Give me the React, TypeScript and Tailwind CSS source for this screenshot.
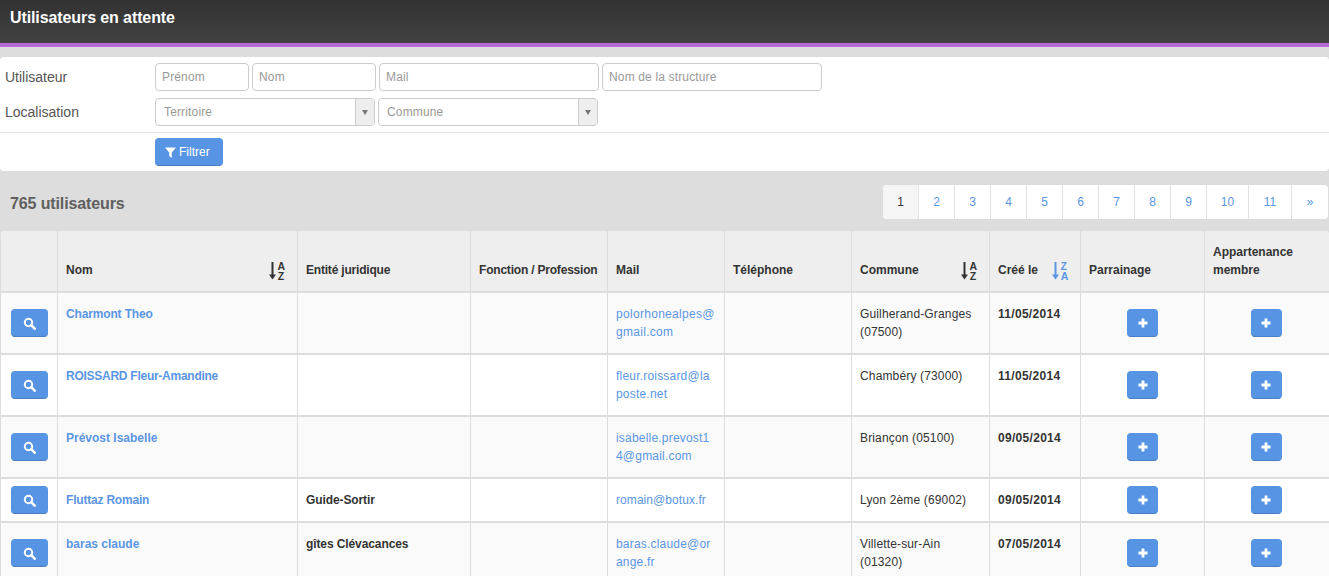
import React from "react";
const Sort = ({ blue, down }: { blue?: boolean; down?: boolean }) => {
  const c = blue ? "#5a96e3" : "#333";
  return (
    <svg width="18" height="22" viewBox="0 -4 18 22" className="shrink-0">
      <path d="M3.5 0v15" stroke={c} strokeWidth="2" fill="none" />
      <path d="M0 12.5h7L3.5 17.5z" fill={c} />
      <text x="8.5" y="8" fontSize="10.5" fontWeight="700" fill={c} fontFamily="Liberation Sans">{down ? "Z" : "A"}</text>
      <text x="8.8" y="17.5" fontSize="10.5" fontWeight="700" fill={c} fontFamily="Liberation Sans">{down ? "A" : "Z"}</text>
    </svg>
  );
};
const Search = () => (
  <svg width="13" height="13" viewBox="0 0 13 13"><circle cx="5.5" cy="5.5" r="3.7" fill="none" stroke="#fff" strokeWidth="2" /><path d="M8.2 8.2L11.7 11.7" stroke="#fff" strokeWidth="2.6" strokeLinecap="round" /></svg>
);
const Plus = () => (
  <svg width="10" height="10" viewBox="0 0 10 10"><path d="M5 0.5v9M0.5 5h9" stroke="#fff" strokeWidth="2.8" /></svg>
);
const Input = ({ w, p }: { w: string; p: string }) => (
  <input readOnly placeholder={p} className={`${w} h-[28px] border border-[#ccc] rounded-[4px] px-[6px] text-[12px] tracking-[0.15px] placeholder:text-[#999] bg-white`} />
);
const Sel = ({ w, p }: { w: string; p: string }) => (
  <div className={`${w} h-[28px] border border-[#ccc] rounded-[4px] flex items-stretch bg-white overflow-hidden`}>
    <span className="flex-1 pl-[8px] text-[12px] tracking-[0.15px] text-[#999] leading-[26px]">{p}</span>
    <span className="w-[19px] bg-[#eeeeee] border-l border-[#ccc] flex items-center justify-center"><span className="border-x-[3.5px] border-x-transparent border-t-[5px] border-t-[#777]" /></span>
  </div>
);
const rows = [
  ["Charmont Theo", "", ["polorhonealpes@", "gmail.com"], ["Guilherand-Granges", "(07500)"], "11/05/2014", 62, true, "tracking-[-0.15px]", "tracking-[0.3px]"],
  ["ROISSARD Fleur-Amandine", "", ["fleur.roissard@la", "poste.net"], ["Chambéry (73000)"], "11/05/2014", 62, false, "tracking-[-0.26px]", "tracking-[0.2px]"],
  ["Prévost Isabelle", "", ["isabelle.prevost1", "4@gmail.com"], ["Briançon (05100)"], "09/05/2014", 62, true, "tracking-[0px]", "tracking-[0.2px]"],
  ["Fluttaz Romain", "Guide-Sortir", ["romain@botux.fr"], ["Lyon 2ème (69002)"], "09/05/2014", 44, false, "tracking-[-0.2px]", "tracking-[0.07px]"],
  ["baras claude", "gîtes Clévacances", ["baras.claude@or", "ange.fr"], ["Villette-sur-Ain", "(01320)"], "07/05/2014", 62, true, "tracking-[0px]", "tracking-[0.2px]"],
] as const;
const th = "border-r border-[#ddd] align-bottom text-left px-[8px] pb-[12px] text-[12px] font-bold text-[#333]";
const td = "border-r border-[#ddd] align-top px-[8px] pt-[12px] text-[12px] leading-[18px]";
const pages = [
  ["1", "w-[36px] bg-[#f5f5f5] text-[#333]"], ["2", "w-[36px]"], ["3", "w-[36px]"], ["4", "w-[36px]"], ["5", "w-[36px]"], ["6", "w-[36px]"],
  ["7", "w-[36px]"], ["8", "w-[36px]"], ["9", "w-[36px]"], ["10", "w-[42px]"], ["11", "w-[43px]"], ["»", "w-[36px]"],
];
export default function App() {
  return (
    <div className="w-[1329px] h-[576px] overflow-hidden bg-[#dddddd] text-[#333]" style={{ fontFamily: '"Liberation Sans", Arial, sans-serif' }}>
      <div className="h-[43px] bg-gradient-to-b from-[#323232] to-[#424242] pl-[10px] pt-[8px] text-[16px] tracking-[-0.1px] leading-[20px] font-bold text-white">Utilisateurs en attente</div>
      <div className="h-[4px] bg-[#b66ad2]" />
      <div className="mt-[10px] bg-white rounded-[4px] h-[114px] pt-[6px]">
        <div className="flex items-center h-[28px]">
          <span className="w-[155px] pl-[5px] text-[14px] text-[#555]">Utilisateur</span>
          <div className="flex gap-[3px]">
            <Input w="w-[94px]" p="Prénom" /><Input w="w-[124px]" p="Nom" /><Input w="w-[220px]" p="Mail" /><Input w="w-[220px]" p="Nom de la structure" />
          </div>
        </div>
        <div className="flex items-center h-[28px] mt-[7px]">
          <span className="w-[155px] pl-[5px] text-[14px] text-[#555]">Localisation</span>
          <div className="flex gap-[3px]"><Sel w="w-[220px]" p="Territoire" /><Sel w="w-[220px]" p="Commune" /></div>
        </div>
        <div className="border-t border-[#e5e5e5] mt-[6px] pl-[155px] pt-[5px]">
          <button className="w-[68px] h-[28px] rounded-[4px] bg-[#5794e4] border border-[#5794e4] border-b-[#4a7fc4] text-white text-[12px] flex items-center pl-[9px] gap-[3px]">
            <svg width="11" height="11" viewBox="0 0 11 11"><path d="M0 0.5h11L6.8 5.5V11L4.2 9V5.5z" fill="#fff" /></svg>Filtrer
          </button>
        </div>
      </div>
      <div className="h-[60px] flex items-start justify-between pt-[14px]">
        <span className="pl-[10px] pt-[10px] leading-[18px] text-[16px] tracking-[-0.12px] font-bold text-[#5f5f5f]">765 utilisateurs</span>
        <div className="mr-[1px] flex bg-white rounded-[4px] overflow-hidden h-[34px] text-[12px] text-[#5a96e3]">
          {pages.map(([n, c]) => (
            <span key={n} className={`${c} border-r border-[#e3e3e3] last:border-r-0 flex items-center justify-center`}>{n}</span>
          ))}
        </div>
      </div>
      <div className="rounded-t-[4px] overflow-hidden">
        <table className="border-collapse table-fixed w-[1329px] bg-white">
          <thead>
            <tr className="h-[61px] bg-[#eeeeee] border-b-2 border-[#ddd]">
              <th className={`${th} w-[57px] border-l`}></th>
              <th className={`${th} w-[240px]`}><div className="flex justify-between items-end pr-[2px]"><span>Nom</span><div className="-mb-[1px]"><Sort /></div></div></th>
              <th className={`${th} w-[173px] tracking-[-0.2px]`}>Entité juridique</th>
              <th className={`${th} w-[137px] whitespace-nowrap tracking-[-0.2px]`}>Fonction / Profession</th>
              <th className={`${th} w-[117px]`}>Mail</th>
              <th className={`${th} w-[127px]`}>Téléphone</th>
              <th className={`${th} w-[138px]`}><div className="flex justify-between items-end pr-[2px]"><span>Commune</span><div className="-mb-[1px]"><Sort /></div></div></th>
              <th className={`${th} w-[91px]`}><div className="flex gap-[14px] items-end"><span>Créé le</span><div className="-mb-[1px]"><Sort blue down /></div></div></th>
              <th className={`${th} w-[124px]`}>Parrainage</th>
              <th className={`${th} w-[125px] leading-[18px] pb-[10px]`}>Appartenance<br />membre</th>
            </tr>
          </thead>
          <tbody>
            {rows.map((r, i) => (
              <tr key={i} style={{ height: r[5] }} className={`border-b-2 border-[#ddd] ${r[6] ? "bg-[#fafafa]" : "bg-white"}`}>
                <td className="border-r border-l border-[#ddd] align-middle text-center">
                  <button className="w-[37px] h-[28px] rounded-[4px] bg-[#5794e4] border border-[#5794e4] border-b-[#4a7fc4] inline-flex items-center justify-center"><Search /></button>
                </td>
                <td className={`${td} font-bold text-[#5a96e3] ${r[7]}`}>{r[0]}</td>
                <td className={`${td} font-bold text-[#333] tracking-[-0.1px]`}>{r[1]}</td>
                <td className={td}></td>
                <td className={`${td} text-[#5a96e3] ${r[8]}`}>{r[2].map(l => <div key={l}>{l}</div>)}</td>
                <td className={td}></td>
                <td className={`${td} text-[#333] tracking-[0.15px]`}>{r[3].map(l => <div key={l}>{l}</div>)}</td>
                <td className={`${td} text-[#333] font-bold tracking-[0.3px]`}>{r[4]}</td>
                {[0, 1].map(k => (
                  <td key={k} className={`border-r border-[#ddd] align-middle text-center ${k === 1 ? "pr-[2px]" : ""}`}>
                    <button className="w-[31px] h-[28px] rounded-[4px] bg-[#5794e4] border border-[#5794e4] border-b-[#4a7fc4] inline-flex items-center justify-center"><Plus /></button>
                  </td>
                ))}
              </tr>
            ))}
          </tbody>
        </table>
      </div>
    </div>
  );
}
